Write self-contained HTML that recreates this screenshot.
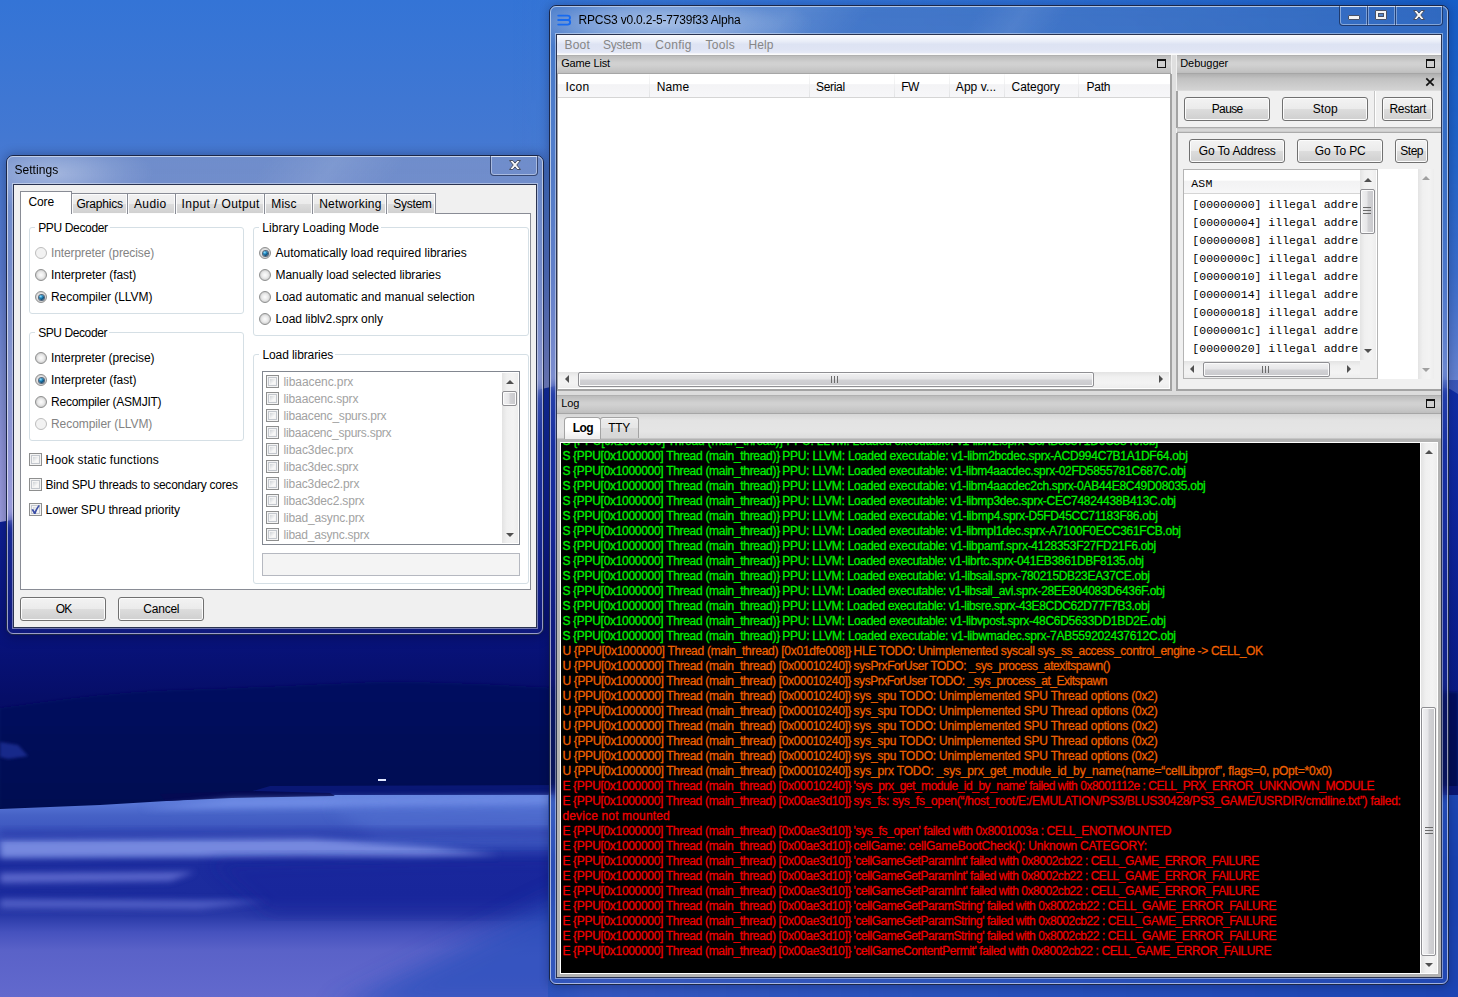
<!DOCTYPE html>
<html lang="en"><head><meta charset="utf-8"><title>RPCS3 v0.0.2-5-7739f33 Alpha</title>
<style>
html,body{margin:0;padding:0;}
body{width:1458px;height:997px;overflow:hidden;position:relative;background:#3a6fd0;font-family:"Liberation Sans",sans-serif;font-size:12px;}
*{box-sizing:border-box;}
.a{position:absolute;}
.t{position:absolute;white-space:pre;}
#wall{position:absolute;left:0;top:0;}
/* ---------- aero window ---------- */
.win{position:absolute;border:1px solid #1b2647;border-radius:7px;}
.win .glass{position:absolute;left:0;top:0;right:0;bottom:0;border-radius:6px;border:1px solid rgba(255,255,255,.58);overflow:hidden;}
.client{position:absolute;background:#f0f0f0;}
.client:before{content:"";position:absolute;left:-2px;top:-2px;right:-2px;bottom:-2px;border:1px solid rgba(255,255,255,.42);pointer-events:none;}
.client:after{content:"";position:absolute;left:-1px;top:-1px;right:-1px;bottom:-1px;border:1px solid #2a3350;pointer-events:none;}
.cap{position:absolute;border:1px solid rgba(20,30,60,.62);border-top:none;border-radius:0 0 4px 4px;box-shadow:inset 0 0 0 1px rgba(255,255,255,.40);}
.cap i{position:absolute;top:0;bottom:0;width:1px;background:rgba(20,30,60,.55);box-shadow:1px 0 0 rgba(255,255,255,.35),-1px 0 0 rgba(255,255,255,.35);}
/* ---------- win7 controls ---------- */
.btn{position:absolute;border:1px solid #707070;border-radius:3px;box-shadow:inset 0 0 0 1px #fcfcfc;
 background:linear-gradient(#f3f3f3 0%,#ebebeb 48%,#dddddd 50%,#cfcfcf 100%);}
.grp{position:absolute;border:1px solid #d5dfe5;border-radius:3px;}
.rad{position:absolute;width:12px;height:12px;border-radius:50%;border:1px solid #8e8f8f;
 background:radial-gradient(circle at 50% 50%,#fdfdfd 0%,#e9e9e9 45%,#cfcfcf 70%,#f4f4f4 100%);}
.rad.on:after{content:"";position:absolute;left:2.5px;top:2.5px;width:5px;height:5px;border-radius:50%;
 background:radial-gradient(circle at 36% 30%,#9fe2fa 0%,#2a94cc 28%,#0e527f 60%,#0a3152 100%);box-shadow:0 0 0 1px rgba(20,45,75,.7);}
.rad.dis{border-color:#bdbdbd;background:#f2f2f2;}
.chk{position:absolute;width:13px;height:13px;border:1px solid #8e8f8f;background:#f4f4f4;
 box-shadow:inset 0 0 0 1px #f4f4f4, inset 0 0 0 2px #c3c7cd;}
.chk:after{content:"";position:absolute;left:3px;top:3px;right:3px;bottom:3px;background:linear-gradient(135deg,#cfd3d7,#f7f7f7 70%);}
.tab{position:absolute;top:193px;height:21px;border:1px solid #898c95;border-bottom:none;
 background:linear-gradient(#f2f2f2 0%,#ebebeb 48%,#dddddd 50%,#cfcfcf 100%);box-shadow:inset 0 0 0 1px #fcfcfc;}
.dock{position:absolute;height:19px;background:linear-gradient(#bcbcbc 0%,#d0d0d0 38%,#d1d1d1 52%,#c7c7c7 80%,#bebebe 100%);border-top:1px solid #b0b0b0;border-bottom:1px solid #a6a6a6;}
.flt{position:absolute;width:9px;height:9px;border:1px solid #111;border-top-width:2px;}
.sbv{position:absolute;width:17px;background:linear-gradient(90deg,#e3e3e3,#f0f0f0 30%,#f3f3f3 70%,#ededed);}
.sbh{position:absolute;height:16px;background:linear-gradient(#e3e3e3,#f0f0f0 30%,#f3f3f3 70%,#ededed);}
.thv{position:absolute;border:1px solid #8f8f93;border-radius:2px;background:linear-gradient(90deg,#f1f1f2 0%,#e6e6e8 45%,#d2d2d5 55%,#c8c8cc 100%);box-shadow:inset 0 0 0 1px #fbfbfb;}
.thh{position:absolute;border:1px solid #8f8f93;border-radius:2px;background:linear-gradient(#f1f1f2 0%,#e6e6e8 45%,#d2d2d5 55%,#c8c8cc 100%);box-shadow:inset 0 0 0 1px #fbfbfb;}
.ar{position:absolute;width:0;height:0;border:4px solid transparent;}
.ar.u{border-bottom:4px solid #505050;border-top:none;}
.ar.d{border-top:4px solid #505050;border-bottom:none;}
.ar.l{border-right:4px solid #505050;border-left:none;}
.ar.r{border-left:4px solid #505050;border-right:none;}
.grip{position:absolute;}

</style></head>
<body>
<svg id="wall" width="1458" height="997" viewBox="0 0 1458 997">
<defs>
<linearGradient id="sky" x1="0" y1="0" x2="0" y2="1">
 <stop offset="0" stop-color="#3474d6"/><stop offset=".25" stop-color="#4378d2"/><stop offset=".5" stop-color="#5a7cd0"/><stop offset=".72" stop-color="#8090d5"/><stop offset=".85" stop-color="#9498dd"/><stop offset="1" stop-color="#a2a2e3"/>
</linearGradient>
<linearGradient id="skyr" x1="0" y1="0" x2="1" y2="0">
 <stop offset="0" stop-color="#3a78dc" stop-opacity="0"/><stop offset=".35" stop-color="#3a78dc" stop-opacity="0"/><stop offset="1" stop-color="#0f58c4" stop-opacity=".8"/>
</linearGradient>
<linearGradient id="mt1" gradientUnits="userSpaceOnUse" x1="0" y1="380" x2="0" y2="820">
 <stop offset="0" stop-color="#1432aa"/><stop offset=".3" stop-color="#0f229a"/><stop offset=".58" stop-color="#08137c"/><stop offset=".72" stop-color="#060e68"/><stop offset="1" stop-color="#040a54"/>
</linearGradient>
<linearGradient id="mt2" gradientUnits="userSpaceOnUse" x1="0" y1="680" x2="0" y2="810">
 <stop offset="0" stop-color="#050d60"/><stop offset="1" stop-color="#030950"/>
</linearGradient>
<linearGradient id="wat" gradientUnits="userSpaceOnUse" x1="0" y1="795" x2="0" y2="997">
 <stop offset="0" stop-color="#6686e0"/><stop offset=".04" stop-color="#5876d6"/><stop offset=".10" stop-color="#4662c6"/><stop offset=".20" stop-color="#3a52bc"/>
 <stop offset=".27" stop-color="#2c42b0"/><stop offset=".33" stop-color="#1c2c9e"/><stop offset=".50" stop-color="#1b2b9d"/><stop offset=".60" stop-color="#2a3aa8"/>
 <stop offset=".68" stop-color="#4652be"/><stop offset=".77" stop-color="#5a62c8"/><stop offset="1" stop-color="#6269cd"/>
</linearGradient>
<linearGradient id="watr" x1="0" y1="0" x2="1" y2="0"><stop offset="0" stop-color="#2a52bc" stop-opacity=".8"/><stop offset=".4" stop-color="#2450ba" stop-opacity=".9"/><stop offset="1" stop-color="#1843b2" stop-opacity=".95"/></linearGradient>
<linearGradient id="mtr" x1="0" y1="0" x2="1" y2="0"><stop offset="0" stop-color="#0c2aa2" stop-opacity="0"/><stop offset="1" stop-color="#0c2aa2" stop-opacity=".5"/></linearGradient>
<linearGradient id="fadeg" x1="0" y1="0" x2="0" y2="1"><stop offset="0" stop-color="#fff"/><stop offset=".25" stop-color="#ddd"/><stop offset=".75" stop-color="#333"/><stop offset="1" stop-color="#000"/></linearGradient>
<mask id="fade"><rect width="1458" height="540" fill="url(#fadeg)"/></mask>
<filter id="b3"><feGaussianBlur stdDeviation="3"/></filter>
<filter id="b2"><feGaussianBlur stdDeviation="1.6"/></filter>
<filter id="b5"><feGaussianBlur stdDeviation="5"/></filter>
<filter id="b12" x="-50%" y="-50%" width="200%" height="200%"><feGaussianBlur stdDeviation="12"/></filter>
<filter id="b8"><feGaussianBlur stdDeviation="8"/></filter>
</defs>
<rect width="1458" height="540" fill="url(#sky)"/>
<rect width="1458" height="540" fill="url(#skyr)" mask="url(#fade)"/>
<!-- far mountains -->
<path d="M0,522 C120,502 330,436 546,388 C700,354 900,332 1100,345 C1250,358 1400,380 1450,389 L1458,394 L1458,820 L0,820 Z" fill="url(#mt1)"/>
<rect x="900" y="380" width="558" height="420" fill="url(#mtr)"/>
<!-- near ridge -->
<path d="M0,708 C60,700 110,692 180,690 C260,688 330,683 390,682 C450,682 520,686 560,688 L1458,692 L1458,820 L0,820 Z" fill="url(#mt2)" filter="url(#b2)"/>
<path d="M0,742 L18,745 L28,756 L8,759 L0,757Z" fill="#2434a0" opacity=".7" filter="url(#b2)"/>
<!-- water -->
<path d="M0,809 L100,805 L200,799 L232,797 L300,795 L560,794.5 L1458,795 L1458,997 L0,997Z" fill="url(#wat)"/>
<!-- far shore strip -->
<path d="M270,786 L560,785 L1458,786 L1458,795 L300,795 L232,797 Z" fill="#0a1878" opacity=".9"/>
<path d="M160,794 L250,791 L330,793 L335,796 L232,798 L165,801Z" fill="#040a52"/>
<g filter="url(#b3)">
 <path d="M232,799 L560,796 L560,804 L140,809 Z" fill="#7792ea" opacity=".8"/>
 <path d="M0,840 L310,838 L430,847 L500,855 L420,857 L300,856 L0,858Z" fill="#7a8ce2" opacity=".95"/>
 <path d="M0,873 L195,872 L170,881 L0,883Z" fill="#6672d4" opacity=".85"/>
 <path d="M0,899 L270,901 L200,909 L0,908Z" fill="#5c69ce" opacity=".8"/>
</g>
<path d="M330,806 L600,800 L600,838 L380,842Z" fill="#5a78d8" opacity=".4" filter="url(#b8)"/>
<path d="M0,829 L560,827 L560,838 L0,840Z" fill="#1a2a9e" opacity=".35" filter="url(#b3)"/>
<path d="M210,862 L560,856 L560,915 L270,915Z" fill="#13219a" opacity=".5" filter="url(#b8)"/>
<rect x="378" y="779" width="8" height="2" fill="#dfe6ff"/>
<path d="M330,1010 L575,890 L575,1010Z" fill="#2a50bc" opacity=".75" filter="url(#b12)"/>
<rect x="548" y="795" width="910" height="202" fill="url(#watr)"/>
</svg>
<div class="win" style="left:6px;top:155px;width:538px;height:480px;box-shadow:0 1px 11px 2px rgba(0,0,30,.28);backdrop-filter:blur(6px);background:linear-gradient(180deg,rgba(178,175,192,.38) 0px,rgba(176,176,196,.36) 60px,rgba(165,168,195,.30) 225px,rgba(130,140,170,.12) 290px,rgba(120,125,140,.07) 100%);">
<div class="glass"><div class="a" style="left:-40px;top:-25px;width:200px;height:80px;background:radial-gradient(ellipse at 42% 52%,rgba(255,255,255,.36),rgba(255,255,255,.10) 40%,rgba(255,255,255,0) 62%);"></div><div class="a" style="left:250px;top:-30px;width:140px;height:90px;transform:skewX(-35deg);background:linear-gradient(90deg,rgba(255,255,255,0),rgba(255,255,255,.10),rgba(255,255,255,0));"></div></div>
</div>
<span class="t" style='left:14.4px;top:162px;font-size:12px;line-height:17px;color:#000;letter-spacing:0.055px;'>Settings</span>
<div class="cap" style="left:490px;top:156px;width:48px;height:20px;"></div>
<svg class="a" style="left:508.5px;top:160px" width="12" height="10" viewBox="0 0 12 10"><path d="M0.5,0.5 L3.9,0.5 L6,3.1 L8.1,0.5 L11.5,0.5 L7.8,5 L11.5,9.5 L8.1,9.5 L6,6.9 L3.9,9.5 L0.5,9.5 L4.2,5 Z" fill="#f6f6f6" stroke="#474f63" stroke-width="1" stroke-linejoin="round"/></svg>
<div class="client" style="left:14px;top:185px;width:522px;height:442px;"></div>
<div class="a" style="left:20px;top:213px;width:511px;height:377px;background:#fff;border:1px solid #898c95;"></div>
<div class="tab" style="left:71px;width:57px;"></div>
<span class="t" style='left:76.4px;top:196px;font-size:12px;line-height:17px;color:#000;letter-spacing:-0.204px;'>Graphics</span>
<div class="tab" style="left:127px;width:49px;"></div>
<span class="t" style='left:134.0px;top:196px;font-size:12px;line-height:17px;color:#000;letter-spacing:0.359px;'>Audio</span>
<div class="tab" style="left:175px;width:90px;"></div>
<span class="t" style='left:181.6px;top:196px;font-size:12px;line-height:17px;color:#000;letter-spacing:0.392px;'>Input / Output</span>
<div class="tab" style="left:264px;width:49px;"></div>
<span class="t" style='left:271.3px;top:196px;font-size:12px;line-height:17px;color:#000;letter-spacing:0.182px;'>Misc</span>
<div class="tab" style="left:312px;width:75px;"></div>
<span class="t" style='left:319.2px;top:196px;font-size:12px;line-height:17px;color:#000;letter-spacing:0.247px;'>Networking</span>
<div class="tab" style="left:386px;width:50px;"></div>
<span class="t" style='left:393.2px;top:196px;font-size:12px;line-height:17px;color:#000;letter-spacing:-0.269px;'>System</span>
<div class="a" style="left:20px;top:191px;width:52px;height:23px;background:#fff;border:1px solid #898c95;border-bottom:none;"></div>
<span class="t" style='left:28.4px;top:194px;font-size:12px;line-height:17px;color:#000;letter-spacing:-0.054px;'>Core</span>
<div class="grp" style="left:29px;top:227px;width:215px;height:87px;"></div>
<div class="a" style="left:35.2px;top:225px;width:74.5px;height:5px;background:#fff;"></div>
<span class="t" style='left:38.2px;top:220px;font-size:12px;line-height:17px;color:#000;letter-spacing:-0.352px;'>PPU Decoder</span>
<div class="rad dis" style="left:35px;top:247px;"></div>
<span class="t" style='left:51.0px;top:245px;font-size:12px;line-height:17px;color:#838383;letter-spacing:-0.104px;'>Interpreter (precise)</span>
<div class="rad" style="left:35px;top:269px;"></div>
<span class="t" style='left:51.0px;top:267px;font-size:12px;line-height:17px;color:#000;letter-spacing:-0.041px;'>Interpreter (fast)</span>
<div class="rad on" style="left:35px;top:291px;"></div>
<span class="t" style='left:51.0px;top:289px;font-size:12px;line-height:17px;color:#000;letter-spacing:-0.063px;'>Recompiler (LLVM)</span>
<div class="grp" style="left:29px;top:332px;width:215px;height:109px;"></div>
<div class="a" style="left:35.2px;top:330px;width:73.8px;height:5px;background:#fff;"></div>
<span class="t" style='left:38.2px;top:325px;font-size:12px;line-height:17px;color:#000;letter-spacing:-0.416px;'>SPU Decoder</span>
<div class="rad" style="left:35px;top:352px;"></div>
<span class="t" style='left:51.0px;top:350px;font-size:12px;line-height:17px;color:#000;letter-spacing:-0.094px;'>Interpreter (precise)</span>
<div class="rad on" style="left:35px;top:374px;"></div>
<span class="t" style='left:51.0px;top:372px;font-size:12px;line-height:17px;color:#000;letter-spacing:-0.030px;'>Interpreter (fast)</span>
<div class="rad" style="left:35px;top:396px;"></div>
<span class="t" style='left:51.0px;top:394px;font-size:12px;line-height:17px;color:#000;letter-spacing:-0.226px;'>Recompiler (ASMJIT)</span>
<div class="rad dis" style="left:35px;top:418px;"></div>
<span class="t" style='left:51.0px;top:416px;font-size:12px;line-height:17px;color:#838383;letter-spacing:-0.069px;'>Recompiler (LLVM)</span>
<div class="chk" style="left:29px;top:453px;"></div>
<span class="t" style='left:45.6px;top:452px;font-size:12px;line-height:17px;color:#000;letter-spacing:0.123px;'>Hook static functions</span>
<div class="chk" style="left:29px;top:478px;"></div>
<span class="t" style='left:45.6px;top:477px;font-size:12px;line-height:17px;color:#000;letter-spacing:-0.226px;'>Bind SPU threads to secondary cores</span>
<div class="chk" style="left:29px;top:503px;"></div>
<svg class="a" style="left:29px;top:503px" width="13" height="13" viewBox="0 0 13 13"><path d="M2.4,6.6 L4.2,5.9 L5.7,8.6 C6.6,6.2 7.9,4 9.7,2 L10.8,2.7 C9,5.2 7.7,7.8 6.6,10.9 L5,10.9 Z" fill="#3b4ea6"/></svg>
<span class="t" style='left:45.6px;top:502px;font-size:12px;line-height:17px;color:#000;letter-spacing:-0.124px;'>Lower SPU thread priority</span>
<div class="grp" style="left:253px;top:227px;width:276px;height:109px;"></div>
<div class="a" style="left:259.3px;top:225px;width:121.6px;height:5px;background:#fff;"></div>
<span class="t" style='left:262.3px;top:220px;font-size:12px;line-height:17px;color:#000;letter-spacing:0.026px;'>Library Loading Mode</span>
<div class="rad on" style="left:259px;top:247px;"></div>
<span class="t" style='left:275.5px;top:245px;font-size:12px;line-height:17px;color:#000;letter-spacing:0.033px;'>Automatically load required libraries</span>
<div class="rad" style="left:259px;top:269px;"></div>
<span class="t" style='left:275.5px;top:267px;font-size:12px;line-height:17px;color:#000;letter-spacing:-0.063px;'>Manually load selected libraries</span>
<div class="rad" style="left:259px;top:291px;"></div>
<span class="t" style='left:275.5px;top:289px;font-size:12px;line-height:17px;color:#000;letter-spacing:0.012px;'>Load automatic and manual selection</span>
<div class="rad" style="left:259px;top:313px;"></div>
<span class="t" style='left:275.5px;top:311px;font-size:12px;line-height:17px;color:#000;letter-spacing:-0.064px;'>Load liblv2.sprx only</span>
<div class="grp" style="left:253px;top:354px;width:276px;height:230px;"></div>
<div class="a" style="left:259.4px;top:352px;width:75.8px;height:5px;background:#fff;"></div>
<span class="t" style='left:262.4px;top:347px;font-size:12px;line-height:17px;color:#000;letter-spacing:-0.089px;'>Load libraries</span>
<div class="a" style="left:262px;top:371px;width:258px;height:174px;background:#fff;border:1px solid #828790;"></div>
<div class="chk" style="left:266px;top:375px;"></div>
<span class="t" style='left:283.5px;top:374px;font-size:12px;line-height:17px;color:#a2a2a2;letter-spacing:-0.071px;'>libaacenc.prx</span>
<div class="chk" style="left:266px;top:392px;"></div>
<span class="t" style='left:283.5px;top:391px;font-size:12px;line-height:17px;color:#a2a2a2;letter-spacing:-0.137px;'>libaacenc.sprx</span>
<div class="chk" style="left:266px;top:409px;"></div>
<span class="t" style='left:283.5px;top:408px;font-size:12px;line-height:17px;color:#a2a2a2;letter-spacing:-0.202px;'>libaacenc_spurs.prx</span>
<div class="chk" style="left:266px;top:426px;"></div>
<span class="t" style='left:283.5px;top:425px;font-size:12px;line-height:17px;color:#a2a2a2;letter-spacing:-0.242px;'>libaacenc_spurs.sprx</span>
<div class="chk" style="left:266px;top:443px;"></div>
<span class="t" style='left:283.5px;top:442px;font-size:12px;line-height:17px;color:#a2a2a2;letter-spacing:-0.071px;'>libac3dec.prx</span>
<div class="chk" style="left:266px;top:460px;"></div>
<span class="t" style='left:283.5px;top:459px;font-size:12px;line-height:17px;color:#a2a2a2;letter-spacing:-0.137px;'>libac3dec.sprx</span>
<div class="chk" style="left:266px;top:477px;"></div>
<span class="t" style='left:283.5px;top:476px;font-size:12px;line-height:17px;color:#a2a2a2;letter-spacing:-0.114px;'>libac3dec2.prx</span>
<div class="chk" style="left:266px;top:494px;"></div>
<span class="t" style='left:283.5px;top:493px;font-size:12px;line-height:17px;color:#a2a2a2;letter-spacing:-0.173px;'>libac3dec2.sprx</span>
<div class="chk" style="left:266px;top:511px;"></div>
<span class="t" style='left:283.5px;top:510px;font-size:12px;line-height:17px;color:#a2a2a2;letter-spacing:-0.173px;'>libad_async.prx</span>
<div class="chk" style="left:266px;top:528px;"></div>
<span class="t" style='left:283.5px;top:527px;font-size:12px;line-height:17px;color:#a2a2a2;letter-spacing:-0.224px;'>libad_async.sprx</span>
<div class="sbv" style="left:502px;top:373px;height:170px;width:16px;"></div>
<div class="ar u" style="left:506px;top:380px;"></div>
<div class="ar d" style="left:506px;top:533px;"></div>
<div class="thv" style="left:502px;top:391px;width:15px;height:15px;"></div>
<div class="a" style="left:262px;top:553px;width:258px;height:23px;background:#f4f4f4;border:1px solid #b5b8c0;"></div>
<div class="btn" style="left:20px;top:597px;width:86px;height:24px;"></div>
<span class="t" style='left:55.8px;top:601px;font-size:12px;line-height:17px;color:#000;letter-spacing:-0.872px;'>OK</span>
<div class="btn" style="left:118px;top:597px;width:86px;height:24px;"></div>
<span class="t" style='left:143.3px;top:601px;font-size:12px;line-height:17px;color:#000;letter-spacing:-0.227px;'>Cancel</span>
<div class="win" style="left:549px;top:5px;width:900px;height:980px;box-shadow:0 1px 10px 1px rgba(0,0,30,.24);backdrop-filter:blur(5px);background:linear-gradient(180deg,rgba(115,135,170,.27) 0px,rgba(118,138,172,.25) 40px,rgba(150,165,200,.18) 300px,rgba(150,165,200,.16) 375px,rgba(140,150,180,.08) 440px,rgba(130,140,170,.06) 100%);">
<div class="glass"><div class="a" style="left:-40px;top:-16px;width:300px;height:64px;background:radial-gradient(ellipse at 50% 50%,rgba(255,255,255,.52),rgba(255,255,255,.30) 35%,rgba(255,255,255,.08) 58%,rgba(255,255,255,0) 72%);"></div><div class="a" style="left:150px;top:-30px;width:160px;height:90px;transform:skewX(-35deg);background:linear-gradient(90deg,rgba(255,255,255,0),rgba(255,255,255,.12),rgba(255,255,255,0));"></div><div class="a" style="left:420px;top:-30px;width:90px;height:90px;transform:skewX(-35deg);background:linear-gradient(90deg,rgba(255,255,255,0),rgba(255,255,255,.08),rgba(255,255,255,0));"></div></div>
</div>
<svg class="a" style="left:556px;top:13px" width="17" height="14" viewBox="0 0 17 14"><g fill="none" stroke="#176af0" stroke-width="1.9" stroke-linecap="round"><path d="M2.2,2.6 H11.5 C14.8,2.6 14.8,7 11.5,7 C15,7 15,11.6 11.5,11.6 H2.2"/><path d="M2.2,7 H11.5"/></g></svg>
<span class="t" style='left:578.5px;top:12px;font-size:12px;line-height:17px;color:#000;letter-spacing:-0.195px;'>RPCS3 v0.0.2-5-7739f33 Alpha</span>
<div class="cap" style="left:1339px;top:6px;width:104px;height:20px;"><i style="left:27px"></i><i style="left:55px"></i></div>
<div class="a" style="left:1348px;top:15px;width:12px;height:5px;background:#f4f4f4;border:1px solid #4a5266;border-radius:1px;"></div>
<div class="a" style="left:1375px;top:10px;width:12px;height:10px;background:#f4f4f4;border:1px solid #4a5266;border-radius:1px;"><div class="a" style="left:2px;top:2px;width:6px;height:4px;border:1px solid #4a5266;background:#5686c8;"></div></div>
<svg class="a" style="left:1412.5px;top:10px" width="12" height="10" viewBox="0 0 12 10"><path d="M0.5,0.5 L3.9,0.5 L6,3.1 L8.1,0.5 L11.5,0.5 L7.8,5 L11.5,9.5 L8.1,9.5 L6,6.9 L3.9,9.5 L0.5,9.5 L4.2,5 Z" fill="#f6f6f6" stroke="#474f63" stroke-width="1" stroke-linejoin="round"/></svg>
<div class="client" style="left:557px;top:35px;width:884px;height:942px;"></div>
<div class="a" style="left:557px;top:35px;width:884px;height:19px;background:linear-gradient(#fafbfe 0%,#e9edf8 35%,#dde3f3 52%,#dfe4f4 80%,#e6eaf7 100%);border-bottom:1px solid #f3f4fa;"></div>
<span class="t" style='left:564.5px;top:37px;font-size:12px;line-height:17px;color:#868686;letter-spacing:0.203px;'>Boot</span>
<span class="t" style='left:603.0px;top:37px;font-size:12px;line-height:17px;color:#868686;letter-spacing:-0.253px;'>System</span>
<span class="t" style='left:655.3px;top:37px;font-size:12px;line-height:17px;color:#868686;letter-spacing:0.285px;'>Config</span>
<span class="t" style='left:705.6px;top:37px;font-size:12px;line-height:17px;color:#868686;letter-spacing:0.257px;'>Tools</span>
<span class="t" style='left:748.4px;top:37px;font-size:12px;line-height:17px;color:#868686;letter-spacing:0.128px;'>Help</span>
<div class="a" style="left:557px;top:54px;width:884px;height:1px;background:#fbfbfb;"></div>
<div class="a" style="left:557px;top:391px;width:884px;height:4px;background:#dcdcdc;"></div>
<div class="a" style="left:1172px;top:55px;width:4px;height:336px;background:#dfdfdf;"></div>
<div class="dock" style="left:557px;top:55px;width:614px;height:19px;"></div>
<span class="t" style='left:561.2px;top:56px;font-size:11px;line-height:15px;color:#000;letter-spacing:-0.149px;'>Game List</span>
<div class="flt" style="left:1157px;top:59px;"></div>
<div class="a" style="left:557px;top:74px;width:615px;height:317px;background:#fff;border:2px solid #a3a3a3;border-top:none;border-left-width:1px;"></div>
<div class="a" style="left:558px;top:74px;width:612px;height:24px;background:linear-gradient(#ffffff 0%,#ffffff 44%,#f3f3f5 46%,#f7f7f9 100%);border-bottom:1px solid #d5d5d5;"></div>
<div class="a" style="left:649px;top:74px;width:1px;height:23px;background:linear-gradient(#fafafa,#e2e3e5);"></div>
<div class="a" style="left:809px;top:74px;width:1px;height:23px;background:linear-gradient(#fafafa,#e2e3e5);"></div>
<div class="a" style="left:894px;top:74px;width:1px;height:23px;background:linear-gradient(#fafafa,#e2e3e5);"></div>
<div class="a" style="left:949px;top:74px;width:1px;height:23px;background:linear-gradient(#fafafa,#e2e3e5);"></div>
<div class="a" style="left:1004px;top:74px;width:1px;height:23px;background:linear-gradient(#fafafa,#e2e3e5);"></div>
<div class="a" style="left:1078px;top:74px;width:1px;height:23px;background:linear-gradient(#fafafa,#e2e3e5);"></div>
<span class="t" style='left:565.6px;top:79px;font-size:12px;line-height:17px;color:#000;letter-spacing:0.328px;'>Icon</span>
<span class="t" style='left:656.7px;top:79px;font-size:12px;line-height:17px;color:#000;letter-spacing:0.146px;'>Name</span>
<span class="t" style='left:816.0px;top:79px;font-size:12px;line-height:17px;color:#000;letter-spacing:-0.315px;'>Serial</span>
<span class="t" style='left:901.2px;top:79px;font-size:12px;line-height:17px;color:#000;letter-spacing:-0.628px;'>FW</span>
<span class="t" style='left:955.8px;top:79px;font-size:12px;line-height:17px;color:#000;letter-spacing:0.075px;'>App v...</span>
<span class="t" style='left:1011.6px;top:79px;font-size:12px;line-height:17px;color:#000;letter-spacing:-0.075px;'>Category</span>
<span class="t" style='left:1086.4px;top:79px;font-size:12px;line-height:17px;color:#000;letter-spacing:-0.197px;'>Path</span>
<div class="sbh" style="left:558px;top:372px;width:611px;height:16px;"></div>
<div class="ar l" style="left:565px;top:375px;"></div>
<div class="ar r" style="left:1158.5px;top:375px;"></div>
<div class="thh" style="left:578px;top:372px;width:516px;height:15px;"></div>
<div class="a" style="left:831px;top:376px;width:8px;height:7px;background:repeating-linear-gradient(90deg,#6b6b6b 0,#6b6b6b 1px,transparent 1px,transparent 3px);"></div>
<div class="dock" style="left:1177px;top:55px;width:264px;height:19px;"></div>
<span class="t" style='left:1180.2px;top:56px;font-size:11px;line-height:15px;color:#000;letter-spacing:-0.041px;'>Debugger</span>
<div class="flt" style="left:1426px;top:59px;"></div>
<div class="a" style="left:1177px;top:74px;width:264px;height:17px;background:linear-gradient(#b0b0b0 0%,#c2c2c2 30%,#d3d3d3 100%);border-bottom:1px solid #dcdcdc;"></div>
<svg class="a" style="left:1425px;top:77px" width="10" height="10" viewBox="0 0 10 10"><path d="M1.3,1.3 L8.7,8.7 M8.7,1.3 L1.3,8.7" stroke="#111" stroke-width="1.7" fill="none"/></svg>
<div class="a" style="left:1176px;top:91px;width:265px;height:37px;background:#f0f0f0;border-left:2px solid #a3a3a3;"></div>
<div class="a" style="left:1374px;top:91px;width:1px;height:36px;background:#c6c6c6;box-shadow:1px 0 0 #fff;"></div>
<div class="btn" style="left:1184px;top:97px;width:86px;height:24px;"></div>
<span class="t" style='left:1211.7px;top:101px;font-size:12px;line-height:17px;color:#000;letter-spacing:-0.606px;'>Pause</span>
<div class="btn" style="left:1282px;top:97px;width:86px;height:24px;"></div>
<span class="t" style='left:1312.7px;top:101px;font-size:12px;line-height:17px;color:#000;letter-spacing:0.078px;'>Stop</span>
<div class="btn" style="left:1382px;top:97px;width:51px;height:24px;"></div>
<span class="t" style='left:1389.5px;top:101px;font-size:12px;line-height:17px;color:#000;letter-spacing:-0.312px;'>Restart</span>
<div class="a" style="left:1177px;top:127px;width:264px;height:6px;background:linear-gradient(#c4c4c4,#dcdcdc 50%,#c8c8c8);border-top:1px solid #ababab;border-bottom:1px solid #ababab;"></div>
<div class="a" style="left:1176px;top:133px;width:265px;height:258px;background:#f0f0f0;border-left:2px solid #a3a3a3;border-bottom:2px solid #a3a3a3;"></div>
<div class="btn" style="left:1189px;top:139px;width:96px;height:24px;"></div>
<span class="t" style='left:1198.7px;top:143px;font-size:12px;line-height:17px;color:#000;letter-spacing:-0.115px;'>Go To Address</span>
<div class="btn" style="left:1297px;top:139px;width:86px;height:24px;"></div>
<span class="t" style='left:1314.7px;top:143px;font-size:12px;line-height:17px;color:#000;letter-spacing:-0.102px;'>Go To PC</span>
<div class="btn" style="left:1395px;top:139px;width:33px;height:24px;"></div>
<span class="t" style='left:1400.2px;top:143px;font-size:12px;line-height:17px;color:#000;letter-spacing:-0.447px;'>Step</span>
<div class="a" style="left:1183px;top:169px;width:235px;height:210px;background:#fff;"></div>
<div class="sbv" style="left:1418px;top:169px;height:210px;width:16px;"></div>
<div class="ar u" style="left:1422px;top:176px;border-bottom-color:#a0a0a0;"></div>
<div class="ar d" style="left:1422px;top:368px;border-top-color:#a0a0a0;"></div>
<div class="a" style="left:1183px;top:169px;width:195px;height:210px;background:#fff;border:1px solid #b4b4b4;"></div>
<div class="a" style="left:1184px;top:170px;width:176px;height:24px;background:linear-gradient(#ffffff 0%,#ffffff 45%,#f2f2f3 47%,#f7f7f8 100%);border-bottom:1px solid #d5d5d5;"></div>
<span class="t" style='left:1191.2px;top:176px;font-size:11.5px;line-height:16px;color:#000;letter-spacing:0.260px;font-family:"Liberation Mono", monospace;'>ASM</span>
<span class="t" style='left:1192.3px;top:197px;font-size:11.5px;line-height:16px;color:#000;letter-spacing:0.015px;font-family:"Liberation Mono", monospace;'>[00000000] illegal addre</span>
<span class="t" style='left:1192.3px;top:215px;font-size:11.5px;line-height:16px;color:#000;letter-spacing:0.015px;font-family:"Liberation Mono", monospace;'>[00000004] illegal addre</span>
<span class="t" style='left:1192.3px;top:233px;font-size:11.5px;line-height:16px;color:#000;letter-spacing:0.015px;font-family:"Liberation Mono", monospace;'>[00000008] illegal addre</span>
<span class="t" style='left:1192.3px;top:251px;font-size:11.5px;line-height:16px;color:#000;letter-spacing:0.015px;font-family:"Liberation Mono", monospace;'>[0000000c] illegal addre</span>
<span class="t" style='left:1192.3px;top:269px;font-size:11.5px;line-height:16px;color:#000;letter-spacing:0.015px;font-family:"Liberation Mono", monospace;'>[00000010] illegal addre</span>
<span class="t" style='left:1192.3px;top:287px;font-size:11.5px;line-height:16px;color:#000;letter-spacing:0.015px;font-family:"Liberation Mono", monospace;'>[00000014] illegal addre</span>
<span class="t" style='left:1192.3px;top:305px;font-size:11.5px;line-height:16px;color:#000;letter-spacing:0.015px;font-family:"Liberation Mono", monospace;'>[00000018] illegal addre</span>
<span class="t" style='left:1192.3px;top:323px;font-size:11.5px;line-height:16px;color:#000;letter-spacing:0.015px;font-family:"Liberation Mono", monospace;'>[0000001c] illegal addre</span>
<span class="t" style='left:1192.3px;top:341px;font-size:11.5px;line-height:16px;color:#000;letter-spacing:0.015px;font-family:"Liberation Mono", monospace;'>[00000020] illegal addre</span>
<div class="sbv" style="left:1360px;top:170px;height:190px;width:16px;"></div>
<div class="ar u" style="left:1363.5px;top:178px;"></div>
<div class="ar d" style="left:1363.5px;top:349px;"></div>
<div class="thv" style="left:1360px;top:189px;width:15px;height:45px;"></div>
<div class="a" style="left:1363px;top:207px;width:8px;height:8px;background:repeating-linear-gradient(#6b6b6b 0,#6b6b6b 1px,transparent 1px,transparent 3px);"></div>
<div class="sbh" style="left:1184px;top:361px;width:176px;height:17px;"></div>
<div class="a" style="left:1360px;top:360px;width:17px;height:18px;background:#f0f0f0;"></div>
<div class="ar l" style="left:1190px;top:364.5px;"></div>
<div class="ar r" style="left:1347px;top:364.5px;"></div>
<div class="thh" style="left:1203px;top:362px;width:127px;height:15px;"></div>
<div class="a" style="left:1262px;top:366px;width:8px;height:7px;background:repeating-linear-gradient(90deg,#6b6b6b 0,#6b6b6b 1px,transparent 1px,transparent 3px);"></div>
<div class="dock" style="left:557px;top:395px;width:884px;height:19px;"></div>
<span class="t" style='left:561.2px;top:396px;font-size:11px;line-height:15px;color:#000;letter-spacing:-0.120px;'>Log</span>
<div class="flt" style="left:1426px;top:399px;"></div>
<div class="a" style="left:557px;top:414px;width:884px;height:25px;background:linear-gradient(#d6d6d6 0,#e3e3e3 25%,#e5e5e5 70%,#dcdcdc 100%);"></div>
<div class="a" style="left:557px;top:438px;width:884px;height:539px;background:#b2b2b2;border-top:1px solid #c6c6c6;"></div>
<div class="a" style="left:560px;top:442px;width:878px;height:532px;background:#fff;"></div>
<div class="a" style="left:600px;top:417px;width:39px;height:21px;border:1px solid #a3a3a3;border-bottom:none;border-radius:3px 3px 0 0;background:linear-gradient(#ededed 0,#e6e6e6 48%,#dbdbdb 52%,#d6d6d6 100%);box-shadow:inset 0 1px 0 #f6f6f6;"></div>
<div class="a" style="left:564px;top:417px;width:37px;height:22px;border:1px solid #a3a3a3;border-bottom:none;border-radius:4px 4px 0 0;background:linear-gradient(#ffffff 0,#ffffff 55%,#ececec 100%);"></div>
<span class="t" style='left:572.7px;top:420px;font-size:12px;line-height:17px;color:#000;letter-spacing:-0.600px;font-weight:bold;'>Log</span>
<span class="t" style='left:608.3px;top:420px;font-size:12px;line-height:17px;color:#000;letter-spacing:-0.357px;'>TTY</span>
<div class="a" style="left:561px;top:443px;width:859px;height:530px;background:#000;"></div>
<div class="sbv" style="left:1421px;top:443px;height:530px;width:16px;"></div>
<div class="ar u" style="left:1425px;top:450px;"></div>
<div class="ar d" style="left:1425px;top:963px;"></div>
<div class="thv" style="left:1421px;top:707px;width:15px;height:249px;"></div>
<div class="a" style="left:1425px;top:827px;width:8px;height:8px;background:repeating-linear-gradient(#6b6b6b 0,#6b6b6b 1px,transparent 1px,transparent 3px);"></div>
<div class="a" style="left:561px;top:443px;width:859px;height:20px;overflow:hidden;">
<span class="t" style='left:1.4px;top:-10px;font-size:12px;line-height:17px;color:#00f000;letter-spacing:-0.213px;-webkit-text-stroke:0.28px;'>S {PPU[0x1000000] Thread (main_thread)} PPU: LLVM: Loaded executable: v1-liblv2.sprx-C5AB53371D0C5840.obj</span>
</div>
<span class="t" style='left:562.4px;top:448px;font-size:12px;line-height:17px;color:#00f000;letter-spacing:-0.302px;-webkit-text-stroke:0.28px;'>S {PPU[0x1000000] Thread (main_thread)}</span>
<span class="t" style='left:782.3px;top:448px;font-size:12px;line-height:17px;color:#00f000;letter-spacing:-0.252px;-webkit-text-stroke:0.28px;'>PPU: LLVM: Loaded executable: v1-libm2bcdec.sprx-ACD994C7B1A1DF64.obj</span>
<span class="t" style='left:562.4px;top:463px;font-size:12px;line-height:17px;color:#00f000;letter-spacing:-0.302px;-webkit-text-stroke:0.28px;'>S {PPU[0x1000000] Thread (main_thread)}</span>
<span class="t" style='left:782.3px;top:463px;font-size:12px;line-height:17px;color:#00f000;letter-spacing:-0.285px;-webkit-text-stroke:0.28px;'>PPU: LLVM: Loaded executable: v1-libm4aacdec.sprx-02FD5855781C687C.obj</span>
<span class="t" style='left:562.4px;top:478px;font-size:12px;line-height:17px;color:#00f000;letter-spacing:-0.302px;-webkit-text-stroke:0.28px;'>S {PPU[0x1000000] Thread (main_thread)}</span>
<span class="t" style='left:782.3px;top:478px;font-size:12px;line-height:17px;color:#00f000;letter-spacing:-0.286px;-webkit-text-stroke:0.28px;'>PPU: LLVM: Loaded executable: v1-libm4aacdec2ch.sprx-0AB44E8C49D08035.obj</span>
<span class="t" style='left:562.4px;top:493px;font-size:12px;line-height:17px;color:#00f000;letter-spacing:-0.302px;-webkit-text-stroke:0.28px;'>S {PPU[0x1000000] Thread (main_thread)}</span>
<span class="t" style='left:782.3px;top:493px;font-size:12px;line-height:17px;color:#00f000;letter-spacing:-0.284px;-webkit-text-stroke:0.28px;'>PPU: LLVM: Loaded executable: v1-libmp3dec.sprx-CEC74824438B413C.obj</span>
<span class="t" style='left:562.4px;top:508px;font-size:12px;line-height:17px;color:#00f000;letter-spacing:-0.302px;-webkit-text-stroke:0.28px;'>S {PPU[0x1000000] Thread (main_thread)}</span>
<span class="t" style='left:782.3px;top:508px;font-size:12px;line-height:17px;color:#00f000;letter-spacing:-0.275px;-webkit-text-stroke:0.28px;'>PPU: LLVM: Loaded executable: v1-libmp4.sprx-D5FD45CC71183F86.obj</span>
<span class="t" style='left:562.4px;top:523px;font-size:12px;line-height:17px;color:#00f000;letter-spacing:-0.302px;-webkit-text-stroke:0.28px;'>S {PPU[0x1000000] Thread (main_thread)}</span>
<span class="t" style='left:782.3px;top:523px;font-size:12px;line-height:17px;color:#00f000;letter-spacing:-0.284px;-webkit-text-stroke:0.28px;'>PPU: LLVM: Loaded executable: v1-libmpl1dec.sprx-A7100F0ECC361FCB.obj</span>
<span class="t" style='left:562.4px;top:538px;font-size:12px;line-height:17px;color:#00f000;letter-spacing:-0.302px;-webkit-text-stroke:0.28px;'>S {PPU[0x1000000] Thread (main_thread)}</span>
<span class="t" style='left:782.3px;top:538px;font-size:12px;line-height:17px;color:#00f000;letter-spacing:-0.279px;-webkit-text-stroke:0.28px;'>PPU: LLVM: Loaded executable: v1-libpamf.sprx-4128353F27FD21F6.obj</span>
<span class="t" style='left:562.4px;top:553px;font-size:12px;line-height:17px;color:#00f000;letter-spacing:-0.302px;-webkit-text-stroke:0.28px;'>S {PPU[0x1000000] Thread (main_thread)}</span>
<span class="t" style='left:782.3px;top:553px;font-size:12px;line-height:17px;color:#00f000;letter-spacing:-0.308px;-webkit-text-stroke:0.28px;'>PPU: LLVM: Loaded executable: v1-librtc.sprx-041EB3861DBF8135.obj</span>
<span class="t" style='left:562.4px;top:568px;font-size:12px;line-height:17px;color:#00f000;letter-spacing:-0.302px;-webkit-text-stroke:0.28px;'>S {PPU[0x1000000] Thread (main_thread)}</span>
<span class="t" style='left:782.3px;top:568px;font-size:12px;line-height:17px;color:#00f000;letter-spacing:-0.324px;-webkit-text-stroke:0.28px;'>PPU: LLVM: Loaded executable: v1-libsail.sprx-780215DB23EA37CE.obj</span>
<span class="t" style='left:562.4px;top:583px;font-size:12px;line-height:17px;color:#00f000;letter-spacing:-0.302px;-webkit-text-stroke:0.28px;'>S {PPU[0x1000000] Thread (main_thread)}</span>
<span class="t" style='left:782.3px;top:583px;font-size:12px;line-height:17px;color:#00f000;letter-spacing:-0.328px;-webkit-text-stroke:0.28px;'>PPU: LLVM: Loaded executable: v1-libsail_avi.sprx-28EE804083D6436F.obj</span>
<span class="t" style='left:562.4px;top:598px;font-size:12px;line-height:17px;color:#00f000;letter-spacing:-0.302px;-webkit-text-stroke:0.28px;'>S {PPU[0x1000000] Thread (main_thread)}</span>
<span class="t" style='left:782.3px;top:598px;font-size:12px;line-height:17px;color:#00f000;letter-spacing:-0.339px;-webkit-text-stroke:0.28px;'>PPU: LLVM: Loaded executable: v1-libsre.sprx-43E8CDC62D77F7B3.obj</span>
<span class="t" style='left:562.4px;top:613px;font-size:12px;line-height:17px;color:#00f000;letter-spacing:-0.302px;-webkit-text-stroke:0.28px;'>S {PPU[0x1000000] Thread (main_thread)}</span>
<span class="t" style='left:782.3px;top:613px;font-size:12px;line-height:17px;color:#00f000;letter-spacing:-0.289px;-webkit-text-stroke:0.28px;'>PPU: LLVM: Loaded executable: v1-libvpost.sprx-48C6D5633DD1BD2E.obj</span>
<span class="t" style='left:562.4px;top:628px;font-size:12px;line-height:17px;color:#00f000;letter-spacing:-0.302px;-webkit-text-stroke:0.28px;'>S {PPU[0x1000000] Thread (main_thread)}</span>
<span class="t" style='left:782.3px;top:628px;font-size:12px;line-height:17px;color:#00f000;letter-spacing:-0.254px;-webkit-text-stroke:0.28px;'>PPU: LLVM: Loaded executable: v1-libwmadec.sprx-7AB559202437612C.obj</span>
<span class="t" style='left:562.4px;top:643px;font-size:12px;line-height:17px;color:#f06000;letter-spacing:-0.266px;-webkit-text-stroke:0.28px;'>U {PPU[0x1000000] Thread (main_thread) [0x01dfe008]}</span>
<span class="t" style='left:853.6px;top:643px;font-size:12px;line-height:17px;color:#f06000;letter-spacing:-0.324px;-webkit-text-stroke:0.28px;'>HLE TODO: Unimplemented syscall sys_ss_access_control_engine -&gt; CELL_OK</span>
<span class="t" style='left:562.4px;top:658px;font-size:12px;line-height:17px;color:#f06000;letter-spacing:-0.331px;-webkit-text-stroke:0.28px;'>U {PPU[0x1000000] Thread (main_thread) [0x00010240]}</span>
<span class="t" style='left:853.6px;top:658px;font-size:12px;line-height:17px;color:#f06000;letter-spacing:-0.404px;-webkit-text-stroke:0.28px;'>sysPrxForUser TODO: _sys_process_atexitspawn()</span>
<span class="t" style='left:562.4px;top:673px;font-size:12px;line-height:17px;color:#f06000;letter-spacing:-0.331px;-webkit-text-stroke:0.28px;'>U {PPU[0x1000000] Thread (main_thread) [0x00010240]}</span>
<span class="t" style='left:853.6px;top:673px;font-size:12px;line-height:17px;color:#f06000;letter-spacing:-0.482px;-webkit-text-stroke:0.28px;'>sysPrxForUser TODO: _sys_process_at_Exitspawn</span>
<span class="t" style='left:562.4px;top:688px;font-size:12px;line-height:17px;color:#f06000;letter-spacing:-0.331px;-webkit-text-stroke:0.28px;'>U {PPU[0x1000000] Thread (main_thread) [0x00010240]}</span>
<span class="t" style='left:853.6px;top:688px;font-size:12px;line-height:17px;color:#f06000;letter-spacing:-0.197px;-webkit-text-stroke:0.28px;'>sys_spu TODO: Unimplemented SPU Thread options (0x2)</span>
<span class="t" style='left:562.4px;top:703px;font-size:12px;line-height:17px;color:#f06000;letter-spacing:-0.331px;-webkit-text-stroke:0.28px;'>U {PPU[0x1000000] Thread (main_thread) [0x00010240]}</span>
<span class="t" style='left:853.6px;top:703px;font-size:12px;line-height:17px;color:#f06000;letter-spacing:-0.197px;-webkit-text-stroke:0.28px;'>sys_spu TODO: Unimplemented SPU Thread options (0x2)</span>
<span class="t" style='left:562.4px;top:718px;font-size:12px;line-height:17px;color:#f06000;letter-spacing:-0.331px;-webkit-text-stroke:0.28px;'>U {PPU[0x1000000] Thread (main_thread) [0x00010240]}</span>
<span class="t" style='left:853.6px;top:718px;font-size:12px;line-height:17px;color:#f06000;letter-spacing:-0.197px;-webkit-text-stroke:0.28px;'>sys_spu TODO: Unimplemented SPU Thread options (0x2)</span>
<span class="t" style='left:562.4px;top:733px;font-size:12px;line-height:17px;color:#f06000;letter-spacing:-0.331px;-webkit-text-stroke:0.28px;'>U {PPU[0x1000000] Thread (main_thread) [0x00010240]}</span>
<span class="t" style='left:853.6px;top:733px;font-size:12px;line-height:17px;color:#f06000;letter-spacing:-0.197px;-webkit-text-stroke:0.28px;'>sys_spu TODO: Unimplemented SPU Thread options (0x2)</span>
<span class="t" style='left:562.4px;top:748px;font-size:12px;line-height:17px;color:#f06000;letter-spacing:-0.331px;-webkit-text-stroke:0.28px;'>U {PPU[0x1000000] Thread (main_thread) [0x00010240]}</span>
<span class="t" style='left:853.6px;top:748px;font-size:12px;line-height:17px;color:#f06000;letter-spacing:-0.197px;-webkit-text-stroke:0.28px;'>sys_spu TODO: Unimplemented SPU Thread options (0x2)</span>
<span class="t" style='left:562.4px;top:763px;font-size:12px;line-height:17px;color:#f06000;letter-spacing:-0.331px;-webkit-text-stroke:0.28px;'>U {PPU[0x1000000] Thread (main_thread) [0x00010240]}</span>
<span class="t" style='left:853.6px;top:763px;font-size:12px;line-height:17px;color:#f06000;letter-spacing:-0.166px;-webkit-text-stroke:0.28px;'>sys_prx TODO: _sys_prx_get_module_id_by_name(name=“cellLibprof”, flags=0, pOpt=*0x0)</span>
<span class="t" style='left:562.4px;top:778px;font-size:12px;line-height:17px;color:#f00000;letter-spacing:-0.318px;-webkit-text-stroke:0.28px;'>E {PPU[0x1000000] Thread (main_thread) [0x00010240]}</span>
<span class="t" style='left:853.6px;top:778px;font-size:12px;line-height:17px;color:#f00000;letter-spacing:-0.473px;-webkit-text-stroke:0.28px;'>&#x27;sys_prx_get_module_id_by_name&#x27; failed with 0x8001112e : CELL_PRX_ERROR_UNKNOWN_MODULE</span>
<span class="t" style='left:562.4px;top:793px;font-size:12px;line-height:17px;color:#f00000;letter-spacing:-0.318px;-webkit-text-stroke:0.28px;'>E {PPU[0x1000000] Thread (main_thread) [0x00ae3d10]}</span>
<span class="t" style='left:853.6px;top:793px;font-size:12px;line-height:17px;color:#f00000;letter-spacing:-0.260px;-webkit-text-stroke:0.28px;'>sys_fs: sys_fs_open(“/host_root/E:/EMULATION/PS3/BLUS30428/PS3_GAME/USRDIR/cmdline.txt”) failed:</span>
<span class="t" style='left:562.4px;top:808px;font-size:12px;line-height:17px;color:#f00000;letter-spacing:0.153px;-webkit-text-stroke:0.28px;'>device not mounted</span>
<span class="t" style='left:562.4px;top:823px;font-size:12px;line-height:17px;color:#f00000;letter-spacing:-0.318px;-webkit-text-stroke:0.28px;'>E {PPU[0x1000000] Thread (main_thread) [0x00ae3d10]}</span>
<span class="t" style='left:853.6px;top:823px;font-size:12px;line-height:17px;color:#f00000;letter-spacing:-0.388px;-webkit-text-stroke:0.28px;'>&#x27;sys_fs_open&#x27; failed with 0x8001003a : CELL_ENOTMOUNTED</span>
<span class="t" style='left:562.4px;top:838px;font-size:12px;line-height:17px;color:#f00000;letter-spacing:-0.318px;-webkit-text-stroke:0.28px;'>E {PPU[0x1000000] Thread (main_thread) [0x00ae3d10]}</span>
<span class="t" style='left:853.6px;top:838px;font-size:12px;line-height:17px;color:#f00000;letter-spacing:-0.214px;-webkit-text-stroke:0.28px;'>cellGame: cellGameBootCheck(): Unknown CATEGORY:</span>
<span class="t" style='left:562.4px;top:853px;font-size:12px;line-height:17px;color:#f00000;letter-spacing:-0.318px;-webkit-text-stroke:0.28px;'>E {PPU[0x1000000] Thread (main_thread) [0x00ae3d10]}</span>
<span class="t" style='left:853.6px;top:853px;font-size:12px;line-height:17px;color:#f00000;letter-spacing:-0.461px;-webkit-text-stroke:0.28px;'>&#x27;cellGameGetParamInt&#x27; failed with 0x8002cb22 : CELL_GAME_ERROR_FAILURE</span>
<span class="t" style='left:562.4px;top:868px;font-size:12px;line-height:17px;color:#f00000;letter-spacing:-0.318px;-webkit-text-stroke:0.28px;'>E {PPU[0x1000000] Thread (main_thread) [0x00ae3d10]}</span>
<span class="t" style='left:853.6px;top:868px;font-size:12px;line-height:17px;color:#f00000;letter-spacing:-0.461px;-webkit-text-stroke:0.28px;'>&#x27;cellGameGetParamInt&#x27; failed with 0x8002cb22 : CELL_GAME_ERROR_FAILURE</span>
<span class="t" style='left:562.4px;top:883px;font-size:12px;line-height:17px;color:#f00000;letter-spacing:-0.318px;-webkit-text-stroke:0.28px;'>E {PPU[0x1000000] Thread (main_thread) [0x00ae3d10]}</span>
<span class="t" style='left:853.6px;top:883px;font-size:12px;line-height:17px;color:#f00000;letter-spacing:-0.461px;-webkit-text-stroke:0.28px;'>&#x27;cellGameGetParamInt&#x27; failed with 0x8002cb22 : CELL_GAME_ERROR_FAILURE</span>
<span class="t" style='left:562.4px;top:898px;font-size:12px;line-height:17px;color:#f00000;letter-spacing:-0.318px;-webkit-text-stroke:0.28px;'>E {PPU[0x1000000] Thread (main_thread) [0x00ae3d10]}</span>
<span class="t" style='left:853.6px;top:898px;font-size:12px;line-height:17px;color:#f00000;letter-spacing:-0.453px;-webkit-text-stroke:0.28px;'>&#x27;cellGameGetParamString&#x27; failed with 0x8002cb22 : CELL_GAME_ERROR_FAILURE</span>
<span class="t" style='left:562.4px;top:913px;font-size:12px;line-height:17px;color:#f00000;letter-spacing:-0.318px;-webkit-text-stroke:0.28px;'>E {PPU[0x1000000] Thread (main_thread) [0x00ae3d10]}</span>
<span class="t" style='left:853.6px;top:913px;font-size:12px;line-height:17px;color:#f00000;letter-spacing:-0.453px;-webkit-text-stroke:0.28px;'>&#x27;cellGameGetParamString&#x27; failed with 0x8002cb22 : CELL_GAME_ERROR_FAILURE</span>
<span class="t" style='left:562.4px;top:928px;font-size:12px;line-height:17px;color:#f00000;letter-spacing:-0.318px;-webkit-text-stroke:0.28px;'>E {PPU[0x1000000] Thread (main_thread) [0x00ae3d10]}</span>
<span class="t" style='left:853.6px;top:928px;font-size:12px;line-height:17px;color:#f00000;letter-spacing:-0.453px;-webkit-text-stroke:0.28px;'>&#x27;cellGameGetParamString&#x27; failed with 0x8002cb22 : CELL_GAME_ERROR_FAILURE</span>
<span class="t" style='left:562.4px;top:943px;font-size:12px;line-height:17px;color:#f00000;letter-spacing:-0.318px;-webkit-text-stroke:0.28px;'>E {PPU[0x1000000] Thread (main_thread) [0x00ae3d10]}</span>
<span class="t" style='left:853.6px;top:943px;font-size:12px;line-height:17px;color:#f00000;letter-spacing:-0.399px;-webkit-text-stroke:0.28px;'>&#x27;cellGameContentPermit&#x27; failed with 0x8002cb22 : CELL_GAME_ERROR_FAILURE</span>
</body></html>
